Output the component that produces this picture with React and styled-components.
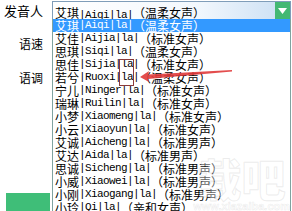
import React from "react";
import styled, { createGlobalStyle } from "styled-components";

const GlobalStyle = createGlobalStyle`
  html, body {
    margin: 0;
    padding: 0;
    background: #ffffff;
  }
`;

const voices = [
  ["艾琪", "Aiqi", "温柔女声"],
  ["艾佳", "Aijia", "标准女声"],
  ["思琪", "Siqi", "温柔女声"],
  ["思佳", "Sijia", "标准女声"],
  ["若兮", "Ruoxi", "温柔女声"],
  ["宁儿", "Ninger", "标准女声"],
  ["瑞琳", "Ruilin", "标准女声"],
  ["小梦", "Xiaomeng", "标准女声"],
  ["小云", "Xiaoyun", "标准女声"],
  ["艾诚", "Aicheng", "标准男声"],
  ["艾达", "Aida", "标准男声"],
  ["思诚", "Sicheng", "标准男声"],
  ["小威", "Xiaowei", "标准男声"],
  ["小刚", "Xiaogang", "标准男声"],
  ["小玲", "Qi", "亲和女声"],
];

const Page = styled.div`
  position: relative;
  width: 292px;
  height: 211px;
  overflow: hidden;
  display: flex;
  background: #ffffff;
  font-family: "Noto Sans CJK SC", sans-serif;
  color: #000;
`;

const Labels = styled.div`
  width: 52px;
  display: flex;
  flex-direction: column;
  align-items: flex-end;
`;

const Label = styled.div`
  font-size: ${(p) => p.size || 12}px;
  line-height: 1;
  padding-right: 9px;
  margin-top: ${(p) => p.top}px;
`;

const GreenButton = styled.div`
  align-self: flex-start;
  margin-top: auto;
  margin-left: 6px;
  width: 44px;
  height: 18px;
  background: #3fbe78;
`;

const Combo = styled.div`
  width: 239px;
  display: flex;
  flex-direction: column;
  padding-top: 1px;
`;

const Select = styled.div`
  height: 17px;
  display: flex;
  align-items: center;
  border: 1px solid #7f9db9;
  border-bottom: none;
  background: linear-gradient(90deg, #ffffff 0%, #f3f8fd 60%, #c9def3 100%);
`;

const SelectText = styled.div`
  flex: 1;
  padding-left: 2px;
  white-space: nowrap;
  overflow: hidden;
`;

const Arrow = styled.div`
  width: 15px;
  height: 17px;
  background: #43b873;
  display: flex;
  align-items: center;
  justify-content: center;
`;

const List = styled.div`
  flex: 1;
  border-left: 1px solid #7fa3a0;
  border-right: 1px solid #7fa3a0;
  background: #fff;
`;

const Row = styled.div`
  height: 13px;
  display: flex;
  align-items: center;
  padding-left: 2px;
  white-space: nowrap;
  background: ${(p) => (p.selected ? "#3399ff" : "transparent")};
  color: ${(p) => (p.selected ? "#ffffff" : "#000000")};
`;

const Han = styled.span`
  font-family: "Noto Sans CJK SC", sans-serif;
  font-size: 12px;
  line-height: 13px;
`;

const Latin = styled.span`
  font-family: "Liberation Mono", monospace;
  font-size: 11px;
  letter-spacing: -0.6px;
  line-height: 13px;
`;

const Overlay = styled.svg`
  position: absolute;
  left: 0;
  top: 0;
  pointer-events: none;
`;

const Watermark = styled.div`
  position: absolute;
  right: 2px;
  bottom: -1px;
  display: flex;
  flex-direction: column;
  align-items: center;
  pointer-events: none;
`;

const WaterBig = styled.div`
  font-family: "Noto Sans CJK SC", sans-serif;
  font-size: 44px;
  font-weight: 900;
  line-height: 44px;
  color: rgba(255, 255, 255, 0.4);
  -webkit-text-stroke: 1px rgba(170, 170, 170, 0.22);
`;

const WaterSmall = styled.div`
  font-family: "Liberation Sans", sans-serif;
  font-size: 11px;
  font-weight: 700;
  line-height: 12px;
  color: rgba(255, 255, 255, 0.4);
  -webkit-text-stroke: 0.6px rgba(170, 170, 170, 0.22);
`;

function VoiceText({ name, pinyin, kind }) {
  return (
    <>
      <Han>{name}</Han>
      <Latin>|{pinyin}|la|</Latin>
      <Han>（{kind}）</Han>
    </>
  );
}

export default function App() {
  return (
    <>
      <GlobalStyle />
      <Page>
        <Labels>
          <Label size={13} top={4}>发音人</Label>
          <Label top={21}>语速</Label>
          <Label top={22}>语调</Label>
          <GreenButton />
        </Labels>
        <Combo>
          <Select>
            <SelectText>
              <VoiceText name="艾琪" pinyin="Aiqi" kind="温柔女声" />
            </SelectText>
            <Arrow>
              <svg width="9" height="6" viewBox="0 0 9 6">
                <path d="M0 0 L9 0 L4.5 6 Z" fill="#fff" />
              </svg>
            </Arrow>
          </Select>
          <List>
            {voices.map(([name, pinyin, kind], i) => (
              <Row key={name} selected={i === 0}>
                <VoiceText name={name} pinyin={pinyin} kind={kind} />
              </Row>
            ))}
          </List>
        </Combo>
        <Overlay width="292" height="211" viewBox="0 0 292 211">
          <rect x="119.5" y="59.5" width="14" height="26" fill="none" stroke="#8a3a3a" strokeWidth="1" />
          <path d="M140 77 L149 71 L148 74.5 L232 70 L232 71.5 L148 79 L149 82 Z" fill="#e03a3a" opacity="0.9" />
        </Overlay>
        <Watermark>
          <WaterBig>载吧</WaterBig>
          <WaterSmall>www.xiazaiba.com</WaterSmall>
        </Watermark>
      </Page>
    </>
  );
}
